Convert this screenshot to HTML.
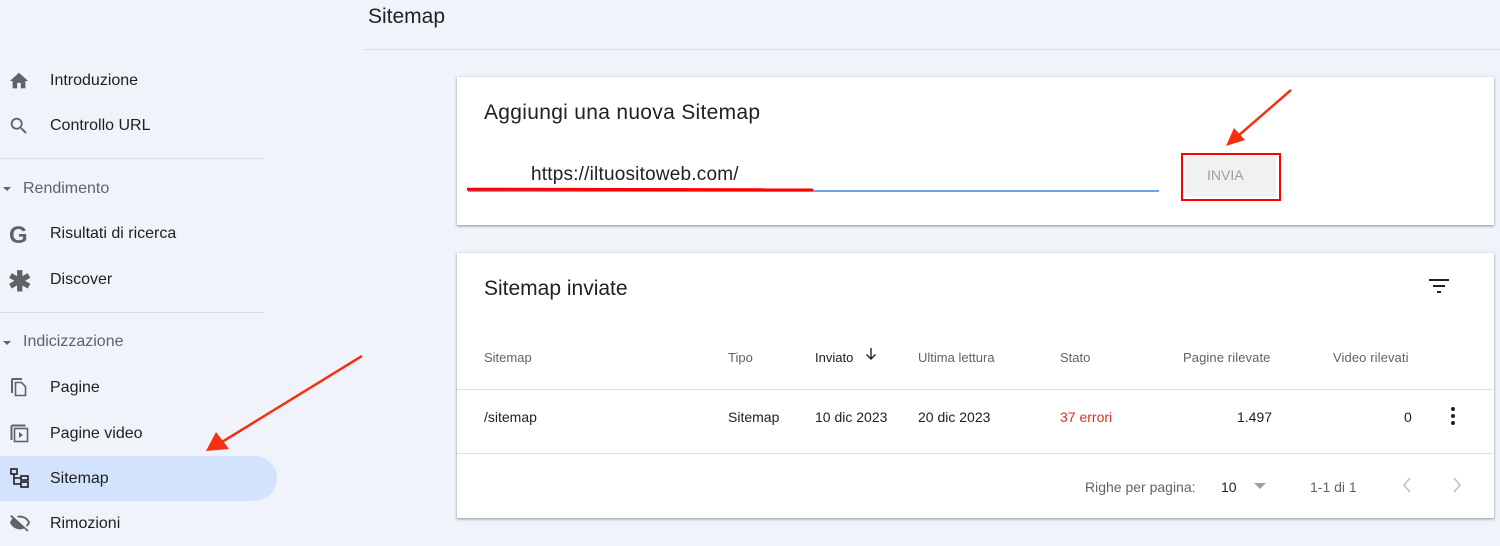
<!DOCTYPE html>
<html><head><meta charset="utf-8"><style>
*{margin:0;padding:0;box-sizing:border-box}
body{width:1500px;height:546px;background:#f0f4fa;font-family:"Liberation Sans",sans-serif;position:relative;overflow:hidden;color:#1f1f1f}
.a{position:absolute;white-space:nowrap}
.nav{font-size:16px;color:#1f1f1f}
.sec{font-size:16px;color:#5f6368}
.hr{position:absolute;height:1px;background:#dadce0}
.card{position:absolute;background:#fff;box-shadow:0 1px 2px rgba(0,0,0,.3),0 1px 3px 1px rgba(0,0,0,.1)}
.th{font-size:13px;color:#5f6368}
.td{font-size:14px;color:#202124}
svg.i{position:absolute}
</style></head><body>
<div class="a" style="left:368px;top:5px;font-size:21px;color:#202124">Sitemap</div>
<div class="hr" style="left:363px;top:49px;width:1137px"></div>

<!-- sidebar -->
<svg class="i" style="left:8px;top:70px" width="22" height="22" viewBox="0 0 24 24"><path d="M10 20v-6h4v6h5v-8h3L12 3 2 12h3v8z" fill="#5f6368"/></svg>
<div class="a nav" style="left:50px;top:72px">Introduzione</div>
<svg class="i" style="left:8px;top:115px" width="22" height="22" viewBox="0 0 24 24"><path d="M15.5 14h-.8l-.3-.3A6.5 6.5 0 1 0 9.5 16a6.5 6.5 0 0 0 4.2-1.6l.3.3v.8l5 5 1.5-1.5-5-5zm-6 0A4.5 4.5 0 1 1 14 9.5 4.5 4.5 0 0 1 9.5 14z" fill="#5f6368"/></svg>
<div class="a nav" style="left:50px;top:117px">Controllo URL</div>
<div class="hr" style="left:0;top:158px;width:264px"></div>
<svg class="i" style="left:2px;top:184px" width="10" height="10" viewBox="0 0 10 10"><path d="M1 3h8L5 7z" fill="#5f6368"/></svg>
<div class="a sec" style="left:23px;top:180px">Rendimento</div>
<div class="a" style="left:9px;top:222px;font-size:24px;font-weight:bold;color:#5f6368">G</div>
<div class="a nav" style="left:50px;top:225px">Risultati di ricerca</div>
<div class="a" style="left:8px;top:265px;font-size:28px;font-weight:bold;color:#5f6368">✱</div>
<div class="a nav" style="left:50px;top:271px">Discover</div>
<div class="hr" style="left:0;top:312px;width:264px"></div>
<svg class="i" style="left:2px;top:338px" width="10" height="10" viewBox="0 0 10 10"><path d="M1 3h8L5 7z" fill="#5f6368"/></svg>
<div class="a sec" style="left:23px;top:333px">Indicizzazione</div>
<svg class="i" style="left:9px;top:377px" width="20" height="20" viewBox="0 0 20 20"><path d="M2 3v13h2V3h9V1H4a2 2 0 0 0-2 2z" fill="#5f6368"/><path d="M6.5 5.5h6l4 4v9h-10z" fill="none" stroke="#5f6368" stroke-width="1.6"/></svg>
<div class="a nav" style="left:50px;top:379px">Pagine</div>
<svg class="i" style="left:9px;top:423px" width="20" height="20" viewBox="0 0 20 20"><path d="M1.5 3v14h2V3.5h13v-2H3z" fill="#5f6368"/><rect x="5.5" y="5.5" width="13" height="13" fill="none" stroke="#5f6368" stroke-width="1.6"/><path d="M10 9v6l4-3z" fill="#5f6368"/></svg>
<div class="a nav" style="left:50px;top:425px">Pagine video</div>
<div style="position:absolute;left:0;top:456px;width:277px;height:45px;background:#d3e3fd;border-radius:0 23px 23px 0"></div>
<svg class="i" style="left:10px;top:468px" width="20" height="20" viewBox="0 0 20 20" fill="none" stroke="#1f1f1f" stroke-width="1.6"><rect x="1" y="1" width="6" height="5"/><rect x="11" y="8" width="7" height="4"/><rect x="11" y="14" width="7" height="5"/><path d="M4 6v10h7M4 10h7"/></svg>
<div class="a nav" style="left:50px;top:470px">Sitemap</div>
<svg class="i" style="left:8px;top:512px" width="24" height="22" viewBox="0 0 24 24"><path d="M12 6a9.8 9.8 0 0 1 8.8 5.5 9.7 9.7 0 0 1-2.4 3.1l1.4 1.4A11.8 11.8 0 0 0 23 11.5 11.8 11.8 0 0 0 8.5 4.5l1.7 1.7A10 10 0 0 1 12 6zM2.7 3.3 1.3 4.7l2.6 2.6A11.7 11.7 0 0 0 1 11.5 11.8 11.8 0 0 0 16.5 18l3.4 3.4 1.4-1.4z" fill="#5f6368"/></svg>
<div class="a nav" style="left:50px;top:515px">Rimozioni</div>

<!-- card 1 -->
<div class="card" style="left:457px;top:77px;width:1037px;height:148px"></div>
<div class="a" style="left:484px;top:101px;font-size:21px;color:#202124;letter-spacing:0.3px">Aggiungi una nuova Sitemap</div>
<div class="a" style="left:531px;top:164px;font-size:19px;color:#202124;letter-spacing:0.2px">https://iltuositoweb.com/</div>
<div style="position:absolute;left:468px;top:190px;width:691px;height:2px;background:#6fa0f0"></div>
<div style="position:absolute;left:467px;top:188px;width:346px;height:3px;background:#f00;transform:rotate(0.1deg)"></div>
<div style="position:absolute;left:1186px;top:156px;width:90px;height:41px;background:#f1f1f1"></div>
<div class="a" style="left:1207px;top:167px;font-size:14px;color:#9e9e9e">INVIA</div>
<div style="position:absolute;left:1181px;top:153px;width:100px;height:48px;border:2px solid #f00"></div>

<!-- card 2 -->
<div class="card" style="left:457px;top:253px;width:1037px;height:265px"></div>
<div class="a" style="left:484px;top:277px;font-size:21px;color:#202124">Sitemap inviate</div>
<svg class="i" style="left:1429px;top:279px" width="20" height="16" viewBox="0 0 20 16"><path d="M0 1h20M4 7h12M8 13h4" stroke="#202124" stroke-width="2"/></svg>
<div class="a th" style="left:484px;top:350px">Sitemap</div>
<div class="a th" style="left:728px;top:350px">Tipo</div>
<div class="a th" style="left:815px;top:350px;color:#202124">Inviato</div>
<svg class="i" style="left:864px;top:347px" width="14" height="14" viewBox="0 0 14 14"><path d="M7 1v11M2.5 7.5 7 12l4.5-4.5" fill="none" stroke="#202124" stroke-width="1.4"/></svg>
<div class="a th" style="left:918px;top:350px">Ultima lettura</div>
<div class="a th" style="left:1060px;top:350px">Stato</div>
<div class="a th" style="left:1183px;top:350px;letter-spacing:0.1px">Pagine rilevate</div>
<div class="a th" style="left:1333px;top:350px;letter-spacing:0.1px">Video rilevati</div>
<div class="hr" style="left:457px;top:389px;width:1037px;background:#e0e0e0"></div>
<div class="a td" style="left:484px;top:409px">/sitemap</div>
<div class="a td" style="left:728px;top:409px">Sitemap</div>
<div class="a td" style="left:815px;top:409px">10 dic 2023</div>
<div class="a td" style="left:918px;top:409px">20 dic 2023</div>
<div class="a td" style="left:1060px;top:409px;color:#d93025">37 errori</div>
<div class="a td" style="left:1237px;top:409px">1.497</div>
<div class="a td" style="left:1404px;top:409px">0</div>
<svg class="i" style="left:1449px;top:405px" width="8" height="22" viewBox="0 0 8 22"><circle cx="4" cy="4" r="2" fill="#202124"/><circle cx="4" cy="11" r="2" fill="#202124"/><circle cx="4" cy="18" r="2" fill="#202124"/></svg>
<div class="hr" style="left:457px;top:453px;width:1037px;background:#e0e0e0"></div>
<div class="a th" style="left:1085px;top:479px;font-size:14px">Righe per pagina:</div>
<div class="a td" style="left:1221px;top:479px">10</div>
<svg class="i" style="left:1253px;top:482px" width="14" height="8" viewBox="0 0 14 8"><path d="M1 1h12L7 7z" fill="#9aa0a6"/></svg>
<div class="a th" style="left:1310px;top:479px;font-size:14px">1-1 di 1</div>
<svg class="i" style="left:1402px;top:477px" width="10" height="16" viewBox="0 0 10 16"><path d="M8 1 2 8l6 7" fill="none" stroke="#bdc1c6" stroke-width="1.6"/></svg>
<svg class="i" style="left:1452px;top:477px" width="10" height="16" viewBox="0 0 10 16"><path d="M2 1l6 7-6 7" fill="none" stroke="#bdc1c6" stroke-width="1.6"/></svg>

<!-- arrows -->
<svg class="i" style="left:0;top:0" width="1500" height="546" viewBox="0 0 1500 546">
<path d="M362 356 L222 442" stroke="#f5300f" stroke-width="2.5"/>
<path d="M206 451 L216 432 L229 449 z" fill="#f5300f"/>
<path d="M1291 90 L1238 136" stroke="#f5300f" stroke-width="2.5"/>
<path d="M1226 146 L1234 128 L1245 140 z" fill="#f5300f"/>
</svg>
</body></html>
